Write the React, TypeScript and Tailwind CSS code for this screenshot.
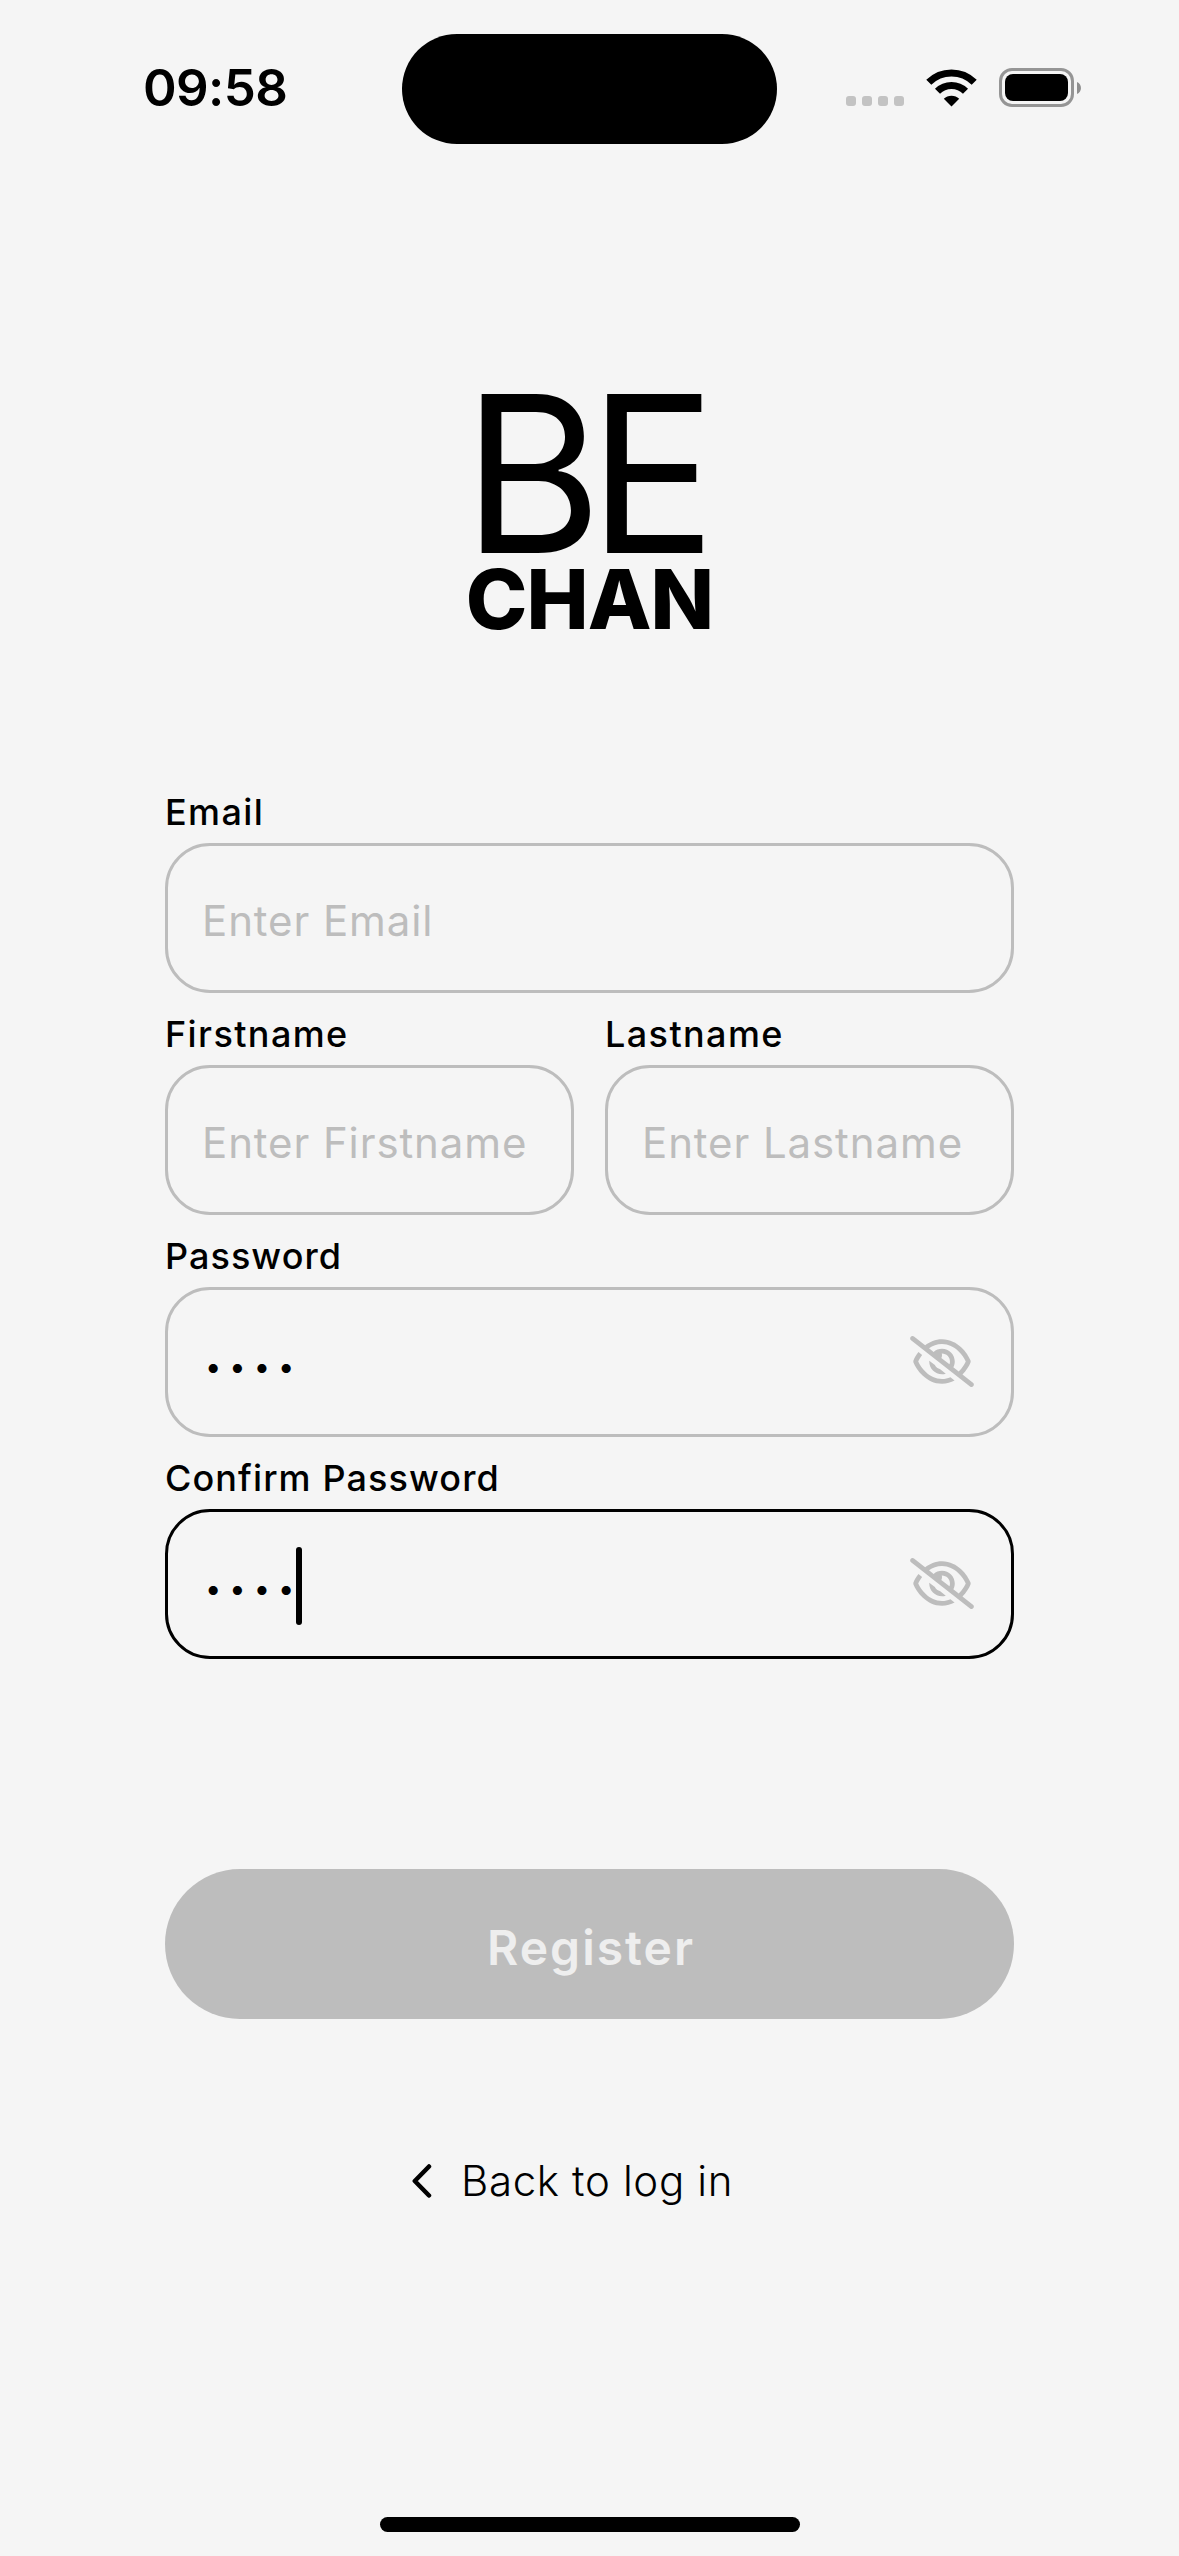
import type { ReactNode } from "react";
import { FaRegEyeSlash } from "react-icons/fa6";

function WifiIcon() {
  return (
    <svg className="ml-[22px] h-[38px] w-[51px] shrink-0" viewBox="0 0 51 38" fill="none">
      <path d="M2.8 13.3a32.4 32.4 0 0 1 45.4 0" stroke="#000" strokeWidth="7.2" />
      <path d="M11.5 22.2a20 20 0 0 1 28 0" stroke="#000" strokeWidth="7.2" />
      <path d="M17.8 29.8a11 11 0 0 1 15.4 0L25.5 37.4Z" fill="#000" />
    </svg>
  );
}

function Battery() {
  return (
    <div className="ml-[22px] flex items-center">
      <div className="h-[39px] w-[75px] rounded-[13px] border-3 border-[#959595] p-[3px]">
        <div className="h-full w-full rounded-[8px] bg-black" />
      </div>
      <svg className="ml-[3px] h-3 w-1" viewBox="0 0 4 12">
        <path d="M0 0C5.3 2 5.3 10 0 12Z" fill="#8f8f8f" />
      </svg>
    </div>
  );
}

function StatusBar() {
  return (
    <header className="flex h-[178px] shrink-0 items-start">
      <time className="mt-[56px] ml-[143px] w-[259px] text-[51px] leading-[64px] font-semibold tracking-[-0.6px]">
        09:58
      </time>
      <div className="mt-[34px] h-[110px] w-[375px] rounded-full bg-black" />
      <div className="mt-[68px] ml-[69px] flex h-[39px] items-end">
        <div className="mb-px flex gap-1.5">
          {[0, 1, 2, 3].map((i) => (
            <span key={i} className="size-[10px] rounded-[3px] bg-[#c3c3c3]" />
          ))}
        </div>
        <WifiIcon />
        <Battery />
      </div>
    </header>
  );
}

function Logo() {
  return (
    <div className="mt-[181px] flex h-[412px] flex-col items-center">
      <div className="-ml-[6px] h-[200px] origin-left scale-x-[0.97] text-[219px] leading-[230px] font-normal tracking-[-14px] whitespace-nowrap">
        BE
      </div>
      <div className="text-[83px] leading-[80px] font-extrabold tracking-[-1px] whitespace-nowrap">CHAN</div>
    </div>
  );
}

function Field({
  label,
  labelTracking = "tracking-[1.4px]",
  placeholder,
  focused = false,
  masked = false,
}: {
  label: string;
  labelTracking?: string;
  placeholder?: string;
  focused?: boolean;
  masked?: boolean;
}) {
  const border = focused ? "border-black" : "border-[#bdbdbd]";
  let content: ReactNode = (
    <span className="pt-[5px] text-[42px] leading-[50px] tracking-[0.9px] whitespace-nowrap text-[#bdbdbd]">
      {placeholder}
    </span>
  );
  if (masked) {
    content = (
      <>
        <span className="ml-[3px] pt-[9px] text-[29px] leading-[50px] tracking-[8px]">••••</span>
        {focused && <span className="mt-[4px] -ml-[6px] h-[78px] w-1.5 rounded-full bg-black" />}
        <FaRegEyeSlash className="mr-[37px] mb-[2px] ml-auto h-[51px] w-[64px] text-[#bdbdbd]" />
      </>
    );
  }
  return (
    <div className="min-w-0 flex-1">
      <div className={`h-[72px] pt-[19px] text-[36px] leading-[44px] font-medium ${labelTracking}`}>{label}</div>
      <div className={`flex h-[150px] items-center rounded-[45px] border-3 pl-[34px] ${border}`}>{content}</div>
    </div>
  );
}

export default function App() {
  return (
    <div className="flex h-[2556px] w-[1179px] flex-col bg-[#f5f5f5] font-['Inter',sans-serif] text-black">
      <StatusBar />
      <Logo />
      <main className="mx-[165px] flex flex-col">
        <div className="flex">
          <Field label="Email" placeholder="Enter Email" />
        </div>
        <div className="flex gap-[31px]">
          <Field label="Firstname" placeholder="Enter Firstname" />
          <Field label="Lastname" placeholder="Enter Lastname" />
        </div>
        <div className="flex">
          <Field label="Password" labelTracking="tracking-[1.05px]" masked />
        </div>
        <div className="flex">
          <Field label="Confirm Password" labelTracking="tracking-[1.1px]" masked focused />
        </div>
        <button className="mt-[210px] h-[150px] rounded-full bg-[#bdbdbd] pt-[7px] pl-[3px] text-[48px] font-semibold tracking-[2px] text-[#eeeeee]">
          Register
        </button>
      </main>
      <a className="mt-[132px] ml-[412px] flex items-center">
        <svg className="h-[34px] w-[20px]" viewBox="0 0 20 34" fill="none">
          <path
            d="M17 2.5 2.8 17 17 31.5"
            stroke="#000"
            strokeWidth="4.5"
            strokeLinecap="round"
            strokeLinejoin="round"
          />
        </svg>
        <span className="ml-[29px] text-[42px] leading-[60px] font-light tracking-[0.65px] whitespace-nowrap">
          Back to log in
        </span>
      </a>
      <div className="mt-auto mb-6 h-[15px] w-[420px] self-center rounded-full bg-black" />
    </div>
  );
}
